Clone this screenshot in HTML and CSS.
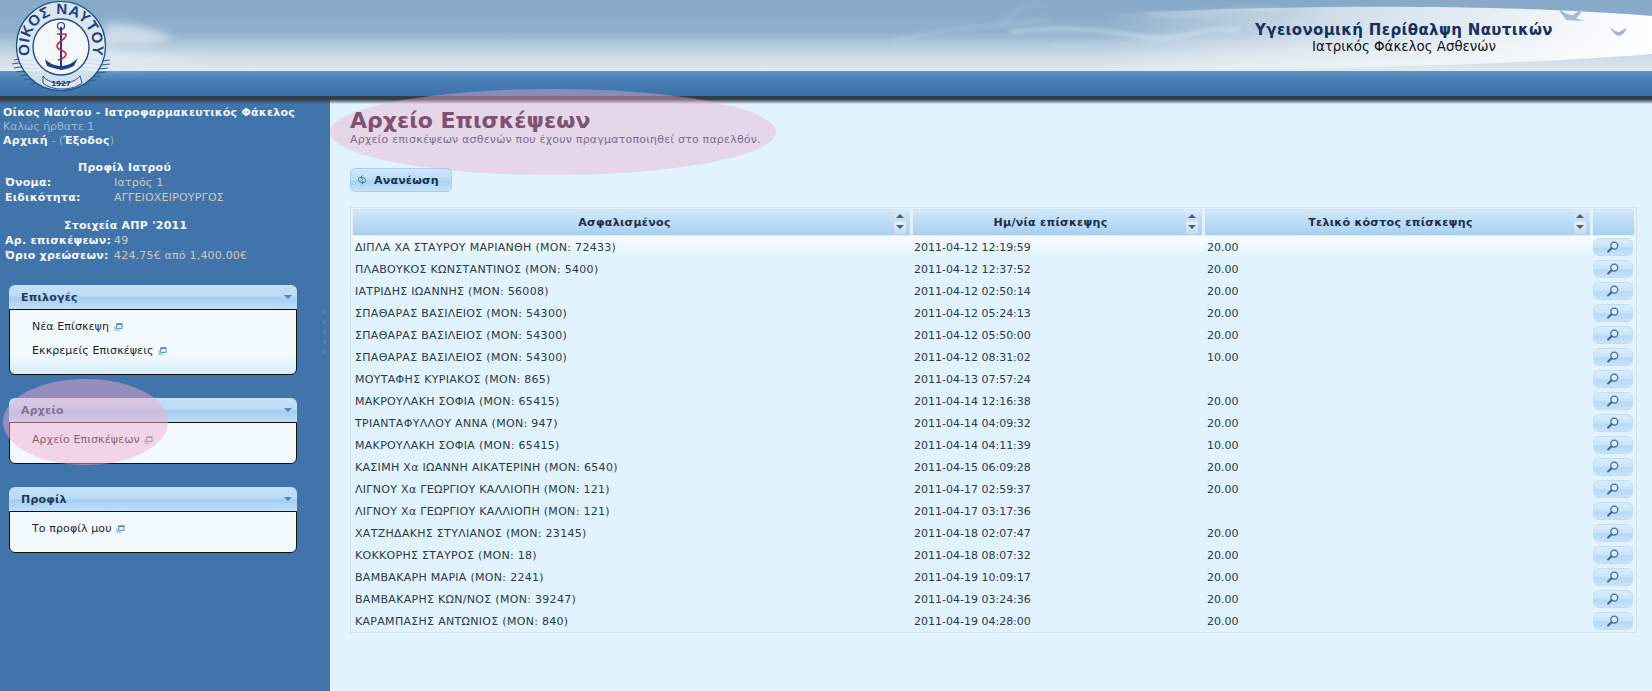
FILE: index.html
```html
<!DOCTYPE html>
<html lang="el">
<head>
<meta charset="utf-8">
<title>Αρχείο Επισκέψεων</title>
<link rel="stylesheet" href="styles.css">
</head>
<body>
<svg class="defs" width="0" height="0" aria-hidden="true">
  <symbol id="ext" viewBox="0 0 10 9">
    <path d="M1 3.5V8H6" fill="none" stroke="#6f9cc6" stroke-width="1"/>
    <rect x="3" y="1" width="6" height="5" fill="none" stroke="#3f7fb8" stroke-width="1"/>
    <path d="M3 1.5H9" stroke="#3f7fb8" stroke-width="1.4"/>
  </symbol>
  <symbol id="mag" viewBox="0 0 14 12">
    <circle cx="8.3" cy="4.6" r="3.5" fill="#dcecf9" stroke="#3a6f9c" stroke-width="1.3"/>
    <path d="M5.5 7.2L2 10.6" stroke="#2f6797" stroke-width="2" stroke-linecap="round"/>
  </symbol>
</svg>

<header class="top">
  <svg class="top-art" viewBox="0 0 1652 96" preserveAspectRatio="none" aria-hidden="true">
    <defs>
      <linearGradient id="sky" x1="0" y1="0" x2="0" y2="1">
        <stop offset="0" stop-color="#86a9c8"/>
        <stop offset=".45" stop-color="#8fb0cd"/>
        <stop offset=".72" stop-color="#c4d5e3"/>
        <stop offset="1" stop-color="#e3ebf1"/>
      </linearGradient>
      <linearGradient id="sea" x1="0" y1="0" x2="0" y2="1">
        <stop offset="0" stop-color="#6094c6"/>
        <stop offset=".35" stop-color="#4b80b6"/>
        <stop offset="1" stop-color="#3d72a9"/>
      </linearGradient>
      <linearGradient id="swoosh" x1="0" y1="0" x2="1" y2="0">
        <stop offset="0" stop-color="#fff" stop-opacity="0"/>
        <stop offset=".45" stop-color="#f2f6f9" stop-opacity=".7"/>
        <stop offset="1" stop-color="#fff"/>
      </linearGradient>
      <filter id="soft" x="-20%" y="-50%" width="140%" height="200%"><feGaussianBlur stdDeviation="4"/></filter>
      <filter id="soft2" x="-10%" y="-100%" width="120%" height="300%"><feGaussianBlur stdDeviation="2"/></filter>
    </defs>
    <rect width="1652" height="72" fill="url(#sky)"/>
    <rect y="71" width="1652" height="25" fill="url(#sea)"/>
    <g filter="url(#soft)" fill="#e6eef4" opacity=".7">
      <path d="M105 24C135 22 155 30 175 38L150 44C130 44 112 42 100 48Z"/>
      <path d="M100 50L210 60L110 68Z"/>
    </g>
    <g filter="url(#soft2)" fill="none" stroke="#dfe9f1">
      <path d="M890 42C950 26 1000 26 1050 20" stroke-width="2.5" opacity=".3"/>
      <path d="M1000 24C1020 16 1010 6 1040 4" stroke-width="2.5" opacity=".2"/>
      <path d="M1010 32C1060 26 1100 30 1140 36S1190 28 1240 30" stroke-width="2.5" stroke="#fff" opacity=".55"/>
      <path d="M1150 14C1200 18 1220 6 1280 10" stroke-width="2" opacity=".55"/>
      <path d="M1050 45C1110 46 1150 38 1230 44" stroke-width="2.5" opacity=".3"/>
    </g>
    <path d="M1100 14C1300 4 1500 4 1652 16V54C1500 66 1300 70 1100 70Z" fill="url(#swoosh)"/>
    <g filter="url(#soft2)" opacity=".5">
      <path d="M1200 12H1320L1300 15L1200 18ZM1200 32H1260L1240 34H1200Z" fill="#b9ccdc"/>
    </g>
    <path d="M1558 8C1564 13 1568 15 1573 15C1576 13 1580 10 1583 8C1582 12 1579 16 1576 18L1584 21L1566 20C1563 16 1560 12 1558 8Z" fill="#a3bcd2"/>
    <path d="M1610 27C1614 31 1617 32 1619 32C1621 31 1624 29 1627 28C1625 32 1623 35 1619 36C1615 35 1612 32 1610 27Z" fill="#9db9d0"/>
  </svg>
  <svg class="logo" viewBox="0 0 124 96" aria-label="Οίκος Ναύτου 1927">
    <defs>
      <path id="ring" d="M30 54A32 32 0 1 1 92 54"/>
    </defs>
    <g fill="none" stroke="#2a5c93" stroke-width="1">
      <path d="M14 60q5-2 10 0t10 0M12 64q6-2 12 0t12 0M14 68q6-2 12 0t12 0M16 72q6-2 12 0t12 0M20 76q6-2 12 0t12 0M24 80q6-2 12 0t12 0M30 84q6-2 12 0M84 60q5-2 10 0t16 0M82 64q6-2 12 0t16 0M80 68q6-2 12 0t16 0M78 72q6-2 12 0t16 0M74 76q6-2 12 0t14 0M70 80q6-2 12 0t14 0M66 84q6-2 12 0t12 0"/>
    </g>
    <circle cx="61" cy="46" r="44.5" fill="#e8f0f6" fill-opacity=".85" stroke="#1f4f88" stroke-width="1.2"/>
    <circle cx="61" cy="47" r="28" fill="#f4f8fb" stroke="#1f4f88" stroke-width="1.4"/>
    <text class="logo-text"><textPath href="#ring" startOffset="50%" text-anchor="middle">ΟΙΚΟΣ ΝΑΥΤΟΥ</textPath></text>
    <path d="M45 59C50 64 56 66 61 66S72 64 78 58L74 66C70 68 66 69 61 70C56 69 50 67 47 66Z" fill="#1f3f86"/>
    <path d="M61 27V68" stroke="#1f3f86" stroke-width="2"/>
    <circle cx="61" cy="26" r="3.5" fill="none" stroke="#1f3f86" stroke-width="1.2"/>
    <path d="M57 34H66C67 40 57 41 57 46S66 50 66 54 58 60 58 60" fill="none" stroke="#d3232f" stroke-width="1.6"/>
    <path d="M43 76C50 86 72 86 80 76L82 83C72 91 52 91 43 83Z" fill="#dfe8f0" stroke="#1f4f88"/>
    <text class="logo-year" x="61" y="86" text-anchor="middle">1927</text>
  </svg>
  <div class="top-title">
    <div class="top-title-main">Υγειονομική Περίθαλψη Ναυτικών</div>
    <div class="top-title-sub">Ιατρικός Φάκελος Ασθενών</div>
  </div>
</header>
<div class="shadow"></div>

<div class="layout">
  <aside class="side">
    <div class="intro">
      <div class="strong">Οίκος Ναύτου - Ιατροφαρμακευτικός Φάκελος</div>
      <div class="muted">Καλώς ήρθατε 1</div>
      <div><span class="strong">Αρχική</span> <span class="muted">- (</span><span class="strong">Έξοδος</span><span class="muted">)</span></div>
    </div>
    <section class="info">
      <h3 class="info-title profile-title">Προφίλ Ιατρού</h3>
      <dl class="info-grid">
        <dt>Όνομα:</dt><dd>Ιατρός 1</dd>
        <dt>Ειδικότητα:</dt><dd>ΑΓΓΕΙΟΧΕΙΡΟΥΡΓΟΣ</dd>
      </dl>
    </section>
    <section class="info">
      <h3 class="info-title stats-title">Στοιχεία ΑΠΡ '2011</h3>
      <dl class="info-grid">
        <dt>Αρ. επισκέψεων:</dt><dd>49</dd>
        <dt>Όριο χρεώσεων:</dt><dd>424.75€ από 1,400.00€</dd>
      </dl>
    </section>

    <nav class="menus">
      <div class="menu">
        <div class="menu-head"><span>Επιλογές</span><i class="caret"></i></div>
        <ul class="menu-body menu-tall">
          <li>Νέα Επίσκεψη <svg class="ext"><use href="#ext"/></svg></li>
          <li>Εκκρεμείς Επισκέψεις <svg class="ext"><use href="#ext"/></svg></li>
        </ul>
      </div>
      <div class="menu">
        <div class="menu-head"><span>Αρχείο</span><i class="caret"></i></div>
        <ul class="menu-body">
          <li>Αρχείο Επισκέψεων <svg class="ext"><use href="#ext"/></svg></li>
        </ul>
      </div>
      <div class="menu">
        <div class="menu-head"><span>Προφίλ</span><i class="caret"></i></div>
        <ul class="menu-body">
          <li>Το προφίλ μου <svg class="ext"><use href="#ext"/></svg></li>
        </ul>
      </div>
    </nav>
    <div class="blob blob-side"></div>
  </aside>
  <div class="split"><i></i><i></i><i></i><i></i><i></i></div>

  <main class="main">
    <div class="blob blob-main"></div>
    <h1 class="title">Αρχείο Επισκέψεων</h1>
    <p class="subtitle">Αρχείο επισκέψεων ασθενών που έχουν πραγματοποιηθεί στο παρελθόν.</p>
    <button class="refresh" type="button">
      <svg class="refresh-icon" viewBox="0 0 12 12"><path d="M6.5 1.5L4.5 3.5L6.5 5.5M4.5 3.5H6.5A3.2 3.2 0 0 1 8.5 9M5.5 6.5L7.5 8.5L5.5 10.5M7.5 8.5H5.5A3.2 3.2 0 0 1 3.5 3" fill="none" stroke="#2f7f9c" stroke-width="1"/></svg>
      Ανανέωση
    </button>
    <div class="table-wrap">
      <table class="grid">
        <colgroup><col class="c1"><col class="c2"><col class="c3"><col class="c4"></colgroup>
        <thead>
          <tr>
            <th><span>Ασφαλισμένος</span><span class="sort"><i class="up"></i><i class="down"></i></span></th>
            <th><span>Ημ/νία επίσκεψης</span><span class="sort"><i class="up"></i><i class="down"></i></span></th>
            <th><span>Τελικό κόστος επίσκεψης</span><span class="sort"><i class="up"></i><i class="down"></i></span></th>
            <th></th>
          </tr>
        </thead>
        <tbody>
          <tr class="first"><td>ΔΙΠΛΑ ΧΑ ΣΤΑΥΡΟΥ ΜΑΡΙΑΝΘΗ (ΜΟΝ: 72433)</td><td>2011-04-12 12:19:59</td><td>20.00</td><td><button class="view" type="button"><svg><use href="#mag"/></svg></button></td></tr>
          <tr><td>ΠΛΑΒΟΥΚΟΣ ΚΩΝΣΤΑΝΤΙΝΟΣ (ΜΟΝ: 5400)</td><td>2011-04-12 12:37:52</td><td>20.00</td><td><button class="view" type="button"><svg><use href="#mag"/></svg></button></td></tr>
          <tr><td>ΙΑΤΡΙΔΗΣ ΙΩΑΝΝΗΣ (ΜΟΝ: 56008)</td><td>2011-04-12 02:50:14</td><td>20.00</td><td><button class="view" type="button"><svg><use href="#mag"/></svg></button></td></tr>
          <tr><td>ΣΠΑΘΑΡΑΣ ΒΑΣΙΛΕΙΟΣ (ΜΟΝ: 54300)</td><td>2011-04-12 05:24:13</td><td>20.00</td><td><button class="view" type="button"><svg><use href="#mag"/></svg></button></td></tr>
          <tr><td>ΣΠΑΘΑΡΑΣ ΒΑΣΙΛΕΙΟΣ (ΜΟΝ: 54300)</td><td>2011-04-12 05:50:00</td><td>20.00</td><td><button class="view" type="button"><svg><use href="#mag"/></svg></button></td></tr>
          <tr><td>ΣΠΑΘΑΡΑΣ ΒΑΣΙΛΕΙΟΣ (ΜΟΝ: 54300)</td><td>2011-04-12 08:31:02</td><td>10.00</td><td><button class="view" type="button"><svg><use href="#mag"/></svg></button></td></tr>
          <tr><td>ΜΟΥΤΑΦΗΣ ΚΥΡΙΑΚΟΣ (ΜΟΝ: 865)</td><td>2011-04-13 07:57:24</td><td></td><td><button class="view" type="button"><svg><use href="#mag"/></svg></button></td></tr>
          <tr><td>ΜΑΚΡΟΥΛΑΚΗ ΣΟΦΙΑ (ΜΟΝ: 65415)</td><td>2011-04-14 12:16:38</td><td>20.00</td><td><button class="view" type="button"><svg><use href="#mag"/></svg></button></td></tr>
          <tr><td>ΤΡΙΑΝΤΑΦΥΛΛΟΥ ΑΝΝΑ (ΜΟΝ: 947)</td><td>2011-04-14 04:09:32</td><td>20.00</td><td><button class="view" type="button"><svg><use href="#mag"/></svg></button></td></tr>
          <tr><td>ΜΑΚΡΟΥΛΑΚΗ ΣΟΦΙΑ (ΜΟΝ: 65415)</td><td>2011-04-14 04:11:39</td><td>10.00</td><td><button class="view" type="button"><svg><use href="#mag"/></svg></button></td></tr>
          <tr><td>ΚΑΣΙΜΗ Χα ΙΩΑΝΝΗ ΑΙΚΑΤΕΡΙΝΗ (ΜΟΝ: 6540)</td><td>2011-04-15 06:09:28</td><td>20.00</td><td><button class="view" type="button"><svg><use href="#mag"/></svg></button></td></tr>
          <tr><td>ΛΙΓΝΟΥ Χα ΓΕΩΡΓΙΟΥ ΚΑΛΛΙΟΠΗ (ΜΟΝ: 121)</td><td>2011-04-17 02:59:37</td><td>20.00</td><td><button class="view" type="button"><svg><use href="#mag"/></svg></button></td></tr>
          <tr><td>ΛΙΓΝΟΥ Χα ΓΕΩΡΓΙΟΥ ΚΑΛΛΙΟΠΗ (ΜΟΝ: 121)</td><td>2011-04-17 03:17:36</td><td></td><td><button class="view" type="button"><svg><use href="#mag"/></svg></button></td></tr>
          <tr><td>ΧΑΤΖΗΔΑΚΗΣ ΣΤΥΛΙΑΝΟΣ (ΜΟΝ: 23145)</td><td>2011-04-18 02:07:47</td><td>20.00</td><td><button class="view" type="button"><svg><use href="#mag"/></svg></button></td></tr>
          <tr><td>ΚΟΚΚΟΡΗΣ ΣΤΑΥΡΟΣ (ΜΟΝ: 18)</td><td>2011-04-18 08:07:32</td><td>20.00</td><td><button class="view" type="button"><svg><use href="#mag"/></svg></button></td></tr>
          <tr><td>ΒΑΜΒΑΚΑΡΗ ΜΑΡΙΑ (ΜΟΝ: 2241)</td><td>2011-04-19 10:09:17</td><td>20.00</td><td><button class="view" type="button"><svg><use href="#mag"/></svg></button></td></tr>
          <tr><td>ΒΑΜΒΑΚΑΡΗΣ ΚΩΝ/ΝΟΣ (ΜΟΝ: 39247)</td><td>2011-04-19 03:24:36</td><td>20.00</td><td><button class="view" type="button"><svg><use href="#mag"/></svg></button></td></tr>
          <tr><td>ΚΑΡΑΜΠΑΣΗΣ ΑΝΤΩΝΙΟΣ (ΜΟΝ: 840)</td><td>2011-04-19 04:28:00</td><td>20.00</td><td><button class="view" type="button"><svg><use href="#mag"/></svg></button></td></tr>
        </tbody>
      </table>
    </div>
  </main>
</div>
</body>
</html>
```

FILE: styles.css
```css
* { box-sizing: border-box; }
html, body { height: 100%; }
body {
  margin: 0;
  height: 691px;
  overflow: hidden;
  background: #e1f3fe;
  font-family: "DejaVu Sans", Verdana, sans-serif;
  font-size: 11px;
  color: #222;
  position: relative;
}
.defs { position: absolute; }

/* Header */
.top { height: 96px; position: relative; overflow: hidden; }
.top-art { position: absolute; inset: 0; width: 100%; height: 100%; }
.logo { position: absolute; left: 0; top: 0; width: 124px; height: 96px; }
.logo-text { font: bold 15px "Liberation Sans", sans-serif; fill: #1f3f7c; letter-spacing: .6px; }
.logo-year { font: bold 7px "DejaVu Sans", sans-serif; fill: #1f3f7c; }
.top-title {
  position: absolute;
  left: 1254px;
  top: 21px;
  width: 300px;
  text-align: center;
}
.top-title-main { font-weight: bold; font-size: 15px; line-height: 18px; color: #16305f; letter-spacing: .35px; white-space: nowrap; }
.top-title-sub { font-size: 13.4px; line-height: 16px; color: #111; white-space: nowrap; }

.shadow {
  height: 8px;
  margin-bottom: -8px;
  position: relative;
  z-index: 2;
  background: linear-gradient(#333d48 0, #333d48 40%, rgba(60,72,85,.55) 70%, rgba(120,135,150,0));
  pointer-events: none;
}

.layout { display: flex; height: 595px; }

/* Sidebar */
.side {
  width: 330px;
  flex: none;
  background: #4174ab;
  padding: 10px 0 0;
  position: relative;
  color: #fff;
}
.intro { padding-left: 3px; line-height: 14px; }
.strong { font-weight: bold; color: #f2f7fb; letter-spacing: .25px; }
.muted { color: #9fb6cf; }
.info { margin-top: 12px; }
.info + .info { margin-top: 13px; }
.info-title { margin: 0; font-size: 11px; font-weight: bold; line-height: 15px; color: #f2f7fb; letter-spacing: .25px; }
.profile-title { padding-left: 78px; }
.stats-title { padding-left: 64px; }
.info-grid {
  margin: 0;
  display: grid;
  grid-template-columns: 114px auto;
  line-height: 15px;
}
.info-grid dt { padding-left: 5px; font-weight: bold; color: #f2f7fb; letter-spacing: .25px; white-space: nowrap; }
.info-grid dd { margin: 0; color: #d0c8bd; letter-spacing: .2px; white-space: nowrap; }

.menus { margin: 22px 0 0 9px; width: 288px; display: flex; flex-direction: column; gap: 23px; }
.menu-head {
  height: 24px;
  border-radius: 6px 6px 0 0;
  background: linear-gradient(#c4e1f8 0, #b9dcf7 45%, #a5cdef 55%, #c0dff8 100%);
  display: flex;
  align-items: center;
  justify-content: space-between;
  padding: 0 5px 0 12px;
  font-weight: bold;
  font-size: 11px;
  letter-spacing: .2px;
  color: #1f3a5c;
}
.caret {
  width: 0; height: 0;
  border: 4px solid transparent;
  border-top: 4px solid #4b83bb;
  border-bottom: 0;
}
.menu-body {
  margin: 0;
  padding: 5px 0 11px 22px;
  list-style: none;
  background: #f3faff;
  border: 1px solid #111;
  border-radius: 0 0 6px 6px;
  color: #222;
  line-height: 24px;
  letter-spacing: .1px;
}
.menu-tall { background: linear-gradient(#f3faff 0, #f3faff 70%, #d6ecfb 100%); }
.menu-body li { white-space: nowrap; }
.ext { width: 9px; height: 8px; margin-left: 1px; vertical-align: -1px; }

.split {
  position: absolute;
  left: 323px;
  top: 310px;
  width: 4px;
  display: flex;
  flex-direction: column;
  gap: 6px;
}
.split i { width: 3px; height: 4px; border-radius: 2px; background: #5680b0; }

.blob { position: absolute; border-radius: 50%; pointer-events: none; z-index: 3; }
.blob-side { left: 3px; top: 283px; width: 165px; height: 86px; background: rgba(240, 170, 205, .48); }
.blob-main { left: 0; top: -7px; width: 446px; height: 86px; background: rgba(238, 175, 205, .42); }

/* Main */
.main { flex: 1; position: relative; padding: 12px 15px 0 20px; min-width: 0; }
.title { position: relative; z-index: 4; margin: 0; font-size: 22px; line-height: 26px; font-weight: bold; color: #7d5170; }
.subtitle { position: relative; z-index: 4; margin: -1px 0 0; font-size: 11px; line-height: 14px; color: #7b6b8c; letter-spacing: .2px; }
.refresh {
  display: flex;
  align-items: center;
  gap: 6px;
  width: 102px;
  height: 24px;
  margin-top: 21px;
  padding: 0 0 0 5px;
  border: 1px solid #a8cfec;
  border-radius: 5px;
  background: linear-gradient(#cfe7fb 0, #b9dcf7 50%, #a9d2f3 55%, #c5e3fa 100%);
  font: bold 11px "DejaVu Sans", sans-serif;
  letter-spacing: .2px;
  color: #12304f;
}
.refresh-icon { width: 12px; height: 12px; }

.table-wrap { margin-top: 15px; border: 1px solid #d3e3ee; padding: 1px 2px 0; width: 1287px; }
.grid { width: 100%; border-collapse: separate; border-spacing: 0; table-layout: fixed; }
.c1 { width: 560px; }
.c2 { width: 292px; }
.c3 { width: 388px; }
.grid th {
  height: 27px;
  padding: 0 14px 0 0;
  border-right: 3px solid #e1f3fe;
  border-bottom: 1px solid #e1f3fe;
  background: linear-gradient(#d3e8f9 0, #bcdcf6 50%, #a8d0f1 100%);
  font-size: 11px;
  font-weight: bold;
  letter-spacing: .3px;
  color: #1a2e45;
  text-align: center;
  position: relative;
}
.grid th:last-child { border-right: 0; padding: 0; }
.sort {
  position: absolute;
  right: 4px;
  top: 1px;
  width: 12px;
  height: 24px;
  background: linear-gradient(#d9e9f6 0, #c9deef 48%, #e4f0f9 52%, #c3d9ec 100%);
  display: flex;
  flex-direction: column;
  align-items: center;
  justify-content: space-between;
  padding: 4px 0 5px;
}
.sort i { width: 0; height: 0; border: 4px solid transparent; }
.sort .up { border-top: 0; border-bottom: 4px solid #4a6076; }
.sort .down { border-bottom: 0; border-top: 4px solid #4a6076; }
.grid td { height: 22px; padding: 0 2px; white-space: nowrap; color: #2c3946; vertical-align: middle; }
.grid td:first-child { letter-spacing: .3px; }
.grid td:nth-child(2) { padding-left: 1px; }
.grid td:last-child { padding: 0; }
.first td { background: linear-gradient(#f6fcff, #e1f3fe); }
.view {
  display: flex;
  align-items: center;
  justify-content: center;
  width: 40px;
  height: 18px;
  padding: 0;
  border: 1px solid #c4dcef;
  border-radius: 6px;
  background: linear-gradient(#d9edfb 0, #c9e4f9 50%, #b3d8f5 55%, #c8e3f9 100%);
}
.view svg { width: 14px; height: 12px; }
```
